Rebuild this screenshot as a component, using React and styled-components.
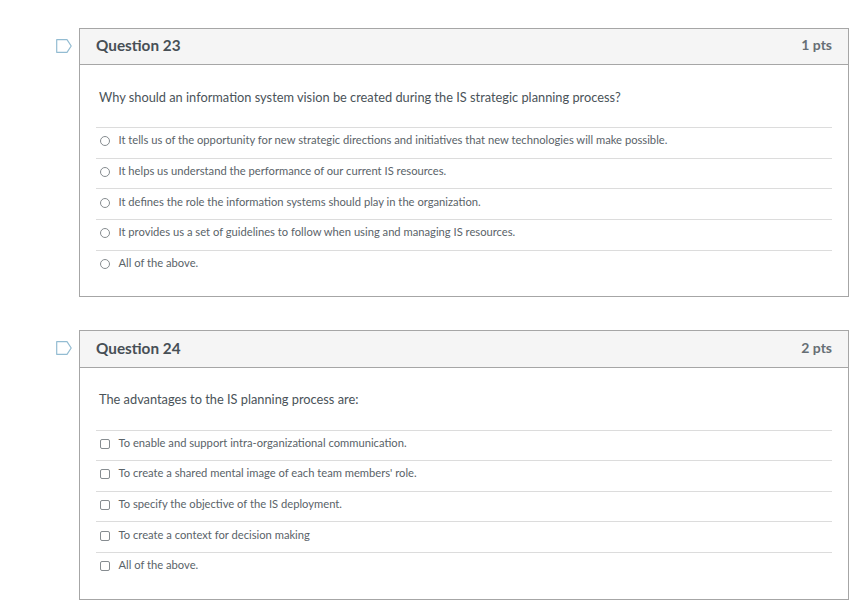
import styled, { createGlobalStyle } from "styled-components"

const questions = [
    {
        title: "Question 23",
        points: "1 pts",
        type: "radio",
        text: "Why should an information system vision be created during the IS strategic planning process?",
        answers: [
            "It tells us of the opportunity for new strategic directions and initiatives that new technologies will make possible.",
            "It helps us understand the performance of our current IS resources.",
            "It defines the role the information systems should play in the organization.",
            "It provides us a set of guidelines to follow when using and managing IS resources.",
            "All of the above.",
        ],
    },
    {
        title: "Question 24",
        points: "2 pts",
        type: "checkbox",
        text: "The advantages to the IS planning process are:",
        answers: [
            "To enable and support intra-organizational communication.",
            "To create a shared mental image of each team members' role.",
            "To specify the objective of the IS deployment.",
            "To create a context for decision making",
            "All of the above.",
        ],
    },
]

function Flag() {
    return (
        <FlagIcon width="16" height="14" viewBox="0 0 16 14">
            <path d="M0.7 0.7H11L15.2 7L11 13.3H0.7Z" fill="none" stroke="#93bcd2" strokeWidth="1.2" strokeLinejoin="round" />
        </FlagIcon>
    )
}

function Question({ question }) {
    return (
        <Row>
            <Flag />
            <Card>
                <Header>
                    <Title>{question.title}</Title>
                    <Points>{question.points}</Points>
                </Header>
                <Body>
                    <Prompt>{question.text}</Prompt>
                    <Answers>
                        {question.answers.map(answer => (
                            <Answer key={answer}>
                                <Mark $type={question.type} />
                                <span>{answer}</span>
                            </Answer>
                        ))}
                    </Answers>
                </Body>
            </Card>
        </Row>
    )
}

export default function App() {
    return (
        <>
            <GlobalStyle />
            <Page>
                {questions.map(question => (
                    <Question key={question.title} question={question} />
                ))}
            </Page>
        </>
    )
}

const GlobalStyle = createGlobalStyle`
    html, body {
        margin: 0;
        background-color: #FFFFFF;
    }

    body {
        font-family: Lato, "Open Sans", sans-serif;
        color: #3f4a50;
    }
`

const Page = styled.div`
    width: 864px;
    height: 609px;
    box-sizing: border-box;
    padding: 28px 15px 0 56px;
    display: flex;
    flex-direction: column;
    gap: 33px;
    overflow: hidden;
`

const Row = styled.div`
    display: flex;
    align-items: flex-start;
    gap: 7px;
`

const FlagIcon = styled.svg`
    flex: none;
    margin-top: 11px;
`

const Card = styled.div`
    flex: 1;
    border: 1px solid #a6a6a6;
    box-sizing: border-box;
`

const Header = styled.div`
    height: 36.2px;
    box-sizing: border-box;
    padding: 0 16px 2.8px;
    display: flex;
    align-items: center;
    justify-content: space-between;
    background-color: #f5f5f5;
    border-bottom: 1px solid #a6a6a6;
`

const Title = styled.h2`
    margin: 0;
    font-size: 15.3px;
    line-height: 18px;
    font-weight: 700;
    color: #474f55;
`

const Points = styled.span`
    font-size: 14px;
    line-height: 18px;
    font-weight: 700;
    color: #666e74;
`

const Body = styled.div`
    padding: 21.8px 16px 16.2px;
`

const Prompt = styled.p`
    margin: 0 0 20.2px 3px;
    font-size: 12.8px;
    line-height: 20px;
    color: #4a5359;
`

const Answers = styled.div`
    display: flex;
    flex-direction: column;
`

const Answer = styled.div`
    height: 30.6px;
    box-sizing: border-box;
    display: flex;
    align-items: center;
    gap: 8.5px;
    padding: 0 0 6px 4px;
    border-top: 1px solid #dcdcdc;
    font-size: 11.2px;
    color: #5a6369;
`

const Mark = styled.span`
    flex: none;
    width: 10px;
    height: 10px;
    margin-top: 3px;
    box-sizing: border-box;
    border: 1px solid #868c90;
    border-radius: ${props => props.$type === "radio" ? "50%" : "2px"};
    background-color: #FFFFFF;
`
